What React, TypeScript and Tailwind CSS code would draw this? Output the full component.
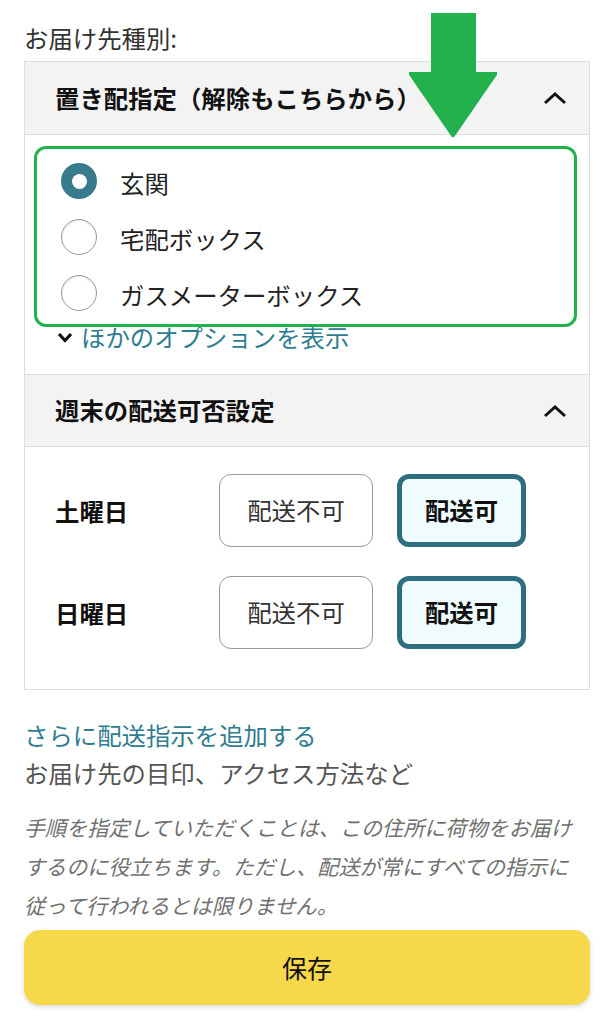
import React from 'react';

const font = { fontFamily: '"Noto Sans CJK JP", "Noto Sans", sans-serif' };

const ChevronUp = () => (
  <svg width="24" height="14" viewBox="0 0 24 14" className="shrink-0">
    <polyline points="2,12 12,3 22,12" fill="none" stroke="#111" strokeWidth="3" />
  </svg>
);

const Radio = ({ checked, label }: { checked?: boolean; label: string }) => (
  <div className="flex h-[56px] items-center gap-[23px]">
    {checked ? (
      <span className="flex h-[36px] w-[36px] items-center justify-center rounded-full bg-[#377b8d]">
        <span className="h-[15px] w-[15px] rounded-full bg-white" />
      </span>
    ) : (
      <span className="h-[36px] w-[36px] rounded-full border-[1.5px] border-[#9a9a9a] bg-white shadow-[inset_0_1px_2px_rgba(0,0,0,0.12)]" />
    )}
    <span className="pt-[3px] text-[24.4px] leading-[36px] text-[#222]">{label}</span>
  </div>
);

const DayRow = ({ day }: { day: string }) => (
  <div className="flex items-center">
    <span className="w-[164px] text-[24.4px] font-bold leading-[36px] text-[#111]">{day}</span>
    <button className="h-[73px] w-[154px] rounded-[12px] border border-[#999] bg-white text-[24.4px] text-[#333]">
      配送不可
    </button>
    <button className="ml-[24px] h-[73px] w-[129px] rounded-[12px] border-[5px] border-[#2f6e7f] bg-[#f0fbfd] text-[24.4px] font-bold text-[#111]">
      配送可
    </button>
  </div>
);

export default function App() {
  return (
    <div className="relative min-h-[1024px] bg-white pl-[24px] pr-[23px] pt-[20px]" style={font}>
      <div className="text-[24.4px] leading-[36px] text-[#333]">お届け先種別:</div>

      <div className="mt-[5px] border border-[#ddd]">
        <div className="flex h-[73px] items-center justify-between border-b border-[#ddd] bg-[#f3f3f3] pl-[30px] pr-[22px]">
          <span className="text-[24.4px] font-bold text-[#111]">置き配指定（解除もこちらから）</span>
          <ChevronUp />
        </div>

        <div className="pb-[19px] pl-[9px] pr-[12px] pt-[11px]">
          <div className="relative z-10 rounded-[12px] border-[3px] border-[#22b14c] bg-white pb-[3px] pl-[24px] pt-[4px]">
            <Radio checked label="玄関" />
            <Radio label="宅配ボックス" />
            <Radio label="ガスメーターボックス" />
          </div>
          <div className="-mt-[8px] flex items-center gap-[8px] pl-[23px]">
            <svg width="16" height="11" viewBox="0 0 16 11">
              <polyline points="2,2 8,8.5 14,2" fill="none" stroke="#111" strokeWidth="3.2" />
            </svg>
            <span className="text-[24.4px] leading-[36px] text-[#2f7d91]">ほかのオプションを表示</span>
          </div>
        </div>

        <div className="flex h-[73px] items-center justify-between border-y border-[#ddd] bg-[#f3f3f3] pl-[30px] pr-[22px]">
          <span className="text-[24.4px] font-bold text-[#111]">週末の配送可否設定</span>
          <ChevronUp />
        </div>

        <div className="flex flex-col gap-[29px] pb-[40px] pl-[30px] pt-[27px]">
          <DayRow day="土曜日" />
          <DayRow day="日曜日" />
        </div>
      </div>

      <div className="mt-[26px] text-[24.4px] leading-[38px] text-[#2f7d91]">さらに配送指示を追加する</div>
      <div className="text-[24.4px] leading-[38px] text-[#555]">お届け先の目印、アクセス方法など</div>

      <p className="mt-[16px] text-[21px] italic leading-[39px] tracking-[0.1px] text-[#707070]">
        手順を指定していただくことは、この住所に荷物をお届け
        <br />
        するのに役立ちます。ただし、配送が常にすべての指示に
        <br />
        従って行われるとは限りません。
      </p>

      <button className="mt-[5px] flex h-[75px] w-full items-center justify-center rounded-[16px] bg-[#f7d84b] text-[25px] text-[#111] shadow-[0_2px_5px_rgba(0,0,0,0.15)]">
        保存
      </button>

      <svg
        className="pointer-events-none absolute left-[409px] top-[13px] z-20"
        width="88"
        height="124"
        viewBox="0 0 88 124"
      >
        <polygon points="23,0 66,0 66,60 88,60 44,124 0,60 23,60" fill="#22b14c" strokeLinejoin="round" stroke="#22b14c" strokeWidth="2" />
      </svg>
    </div>
  );
}
